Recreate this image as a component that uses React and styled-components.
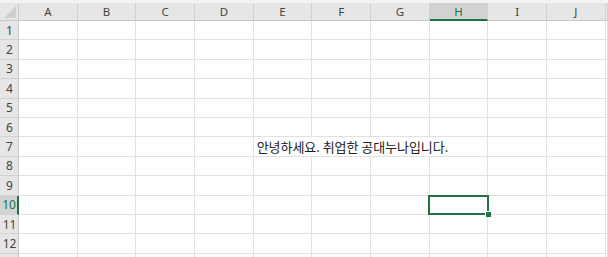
import React from 'react'
import styled, { createGlobalStyle, css } from 'styled-components'

const GlobalStyle = createGlobalStyle`
  body {
    margin: 0;
    background: #ffffff;
    overflow: hidden;
  }
`

const COLS = ['A', 'B', 'C', 'D', 'E', 'F', 'G', 'H', 'I', 'J']
const ROWS = [1, 2, 3, 4, 5, 6, 7, 8, 9, 10, 11, 12]
const TEMPLATE = '19px repeat(10, 58.68px) 1fr'

const Sheet = styled.div`
  width: 608px;
  height: 257px;
  overflow: hidden;
  background: #ffffff;
  font-family: "Noto Sans", "Open Sans", sans-serif;
`

const TopStrip = styled.div`
  height: 3px;
  background: #f3f3f3;
`

const Row = styled.div`
  display: grid;
  grid-template-columns: ${TEMPLATE};
  height: ${(p) => p.$h}px;
`

const Corner = styled.div`
  position: relative;
  background: #e6e6e6;
  border-right: 1px solid #c9c9c9;
  border-bottom: 1px solid #c9c9c9;
  box-sizing: border-box;
  &::after {
    content: '';
    position: absolute;
    right: 2px;
    bottom: 2px;
    border-style: solid;
    border-width: 0 0 12px 12px;
    border-color: transparent transparent #cfcfcf transparent;
  }
`

const ColHead = styled.div`
  box-sizing: border-box;
  background: #e6e6e6;
  border-right: 1px solid #d2d2d2;
  border-bottom: 1px solid #c9c9c9;
  color: #444444;
  font-size: 11.5px;
  display: flex;
  align-items: center;
  justify-content: center;
  ${(p) =>
    p.$active &&
    css`
      background: #d2d2d2;
      color: #217346;
      border-bottom: 2px solid #217346;
      padding-top: 1px;
    `}
`

const RowHead = styled.div`
  box-sizing: border-box;
  background: #e6e6e6;
  border-right: 1px solid #c9c9c9;
  border-bottom: 1px solid #d2d2d2;
  color: #444444;
  font-size: 12px;
  display: flex;
  align-items: center;
  justify-content: center;
  padding-left: 1px;
  ${(p) =>
    p.$active &&
    css`
      background: #d2d2d2;
      color: #217346;
      border-right: 2px solid #217346;
    `}
`

const Cell = styled.div`
  position: relative;
  box-sizing: border-box;
  border-right: 1px solid #e1e1e1;
  border-bottom: 1px solid #e1e1e1;
  grid-column: span ${(p) => p.$span || 1};
`

const CellText = styled.span`
  position: absolute;
  left: 3px;
  top: 0;
  bottom: 0;
  display: flex;
  align-items: center;
  white-space: nowrap;
  color: #222222;
  font-family: "Noto Sans CJK KR", "Noto Sans", sans-serif;
  font-size: 13px;
  letter-spacing: -0.05px;
`

const Selection = styled.div`
  position: absolute;
  left: -2px;
  top: -1px;
  right: -2px;
  bottom: -1px;
  border: 2px solid #217346;
  z-index: 2;
  &::after {
    content: '';
    position: absolute;
    right: -4px;
    bottom: -4px;
    width: 5px;
    height: 5px;
    background: #217346;
    border: 1px solid #ffffff;
    border-width: 1px 0 0 1px;
  }
`

const TEXT_ROW = 7
const TEXT_COL = 4
const SEL_ROW = 10
const SEL_COL = 7

function renderCells(row) {
  const cells = []
  let c = 0
  while (c < 11) {
    if (row === TEXT_ROW && c === TEXT_COL) {
      cells.push(
        <Cell key={c} $span={4}>
          <CellText>안녕하세요. 취업한 공대누나입니다.</CellText>
        </Cell>
      )
      c += 4
      continue
    }
    cells.push(
      <Cell key={c}>{row === SEL_ROW && c === SEL_COL && <Selection />}</Cell>
    )
    c += 1
  }
  return cells
}

export default function App() {
  return (
    <>
      <GlobalStyle />
      <Sheet>
        <TopStrip />
        <Row $h={18}>
          <Corner />
          {COLS.map((col, i) => (
            <ColHead key={col} $active={i === SEL_COL}>
              {col}
            </ColHead>
          ))}
          <ColHead />
        </Row>
        {ROWS.map((row) => (
          <Row key={row} $h={19.4}>
            <RowHead $active={row === SEL_ROW}>{row}</RowHead>
            {renderCells(row)}
          </Row>
        ))}
        <Row $h={19.4}>
          <RowHead />
          {renderCells(0)}
        </Row>
      </Sheet>
    </>
  )
}
